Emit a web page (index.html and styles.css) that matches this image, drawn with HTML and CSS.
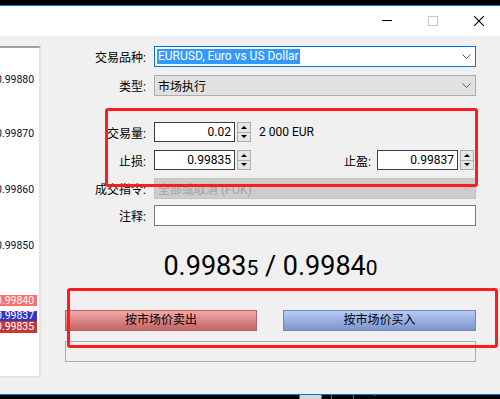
FILE: index.html
```html
<!DOCTYPE html>
<html lang="zh-CN">
<head>
    <meta charset="UTF-8">
    <meta name="viewport" content="width=device-width, initial-scale=1.0">
    <title>订单</title>
    <link rel="stylesheet" href="styles.css">
</head>
<body>
    <div class="screen">
        <div class="topbar"></div>

        <div class="titlebar">
            <div class="win-btns">
                <span class="win-btn"><svg width="10" height="10" viewBox="0 0 10 10"><path d="M0 4.5H10" stroke="#000"/></svg></span>
                <span class="win-btn"><svg width="10" height="10" viewBox="0 0 10 10"><rect x="0.5" y="0.5" width="9" height="9" fill="none" stroke="#c6c6c6"/></svg></span>
                <span class="win-btn"><svg width="10" height="10" viewBox="0 0 10 10"><path d="M0 0L10 10M10 0L0 10" stroke="#000" stroke-width="1.1"/></svg></span>
            </div>
        </div>

        <div class="main">
            <div class="chart">
                <span class="axis-label" style="top: 26px">0.99880</span>
                <span class="axis-label" style="top: 80px">0.99870</span>
                <span class="axis-label" style="top: 136px">0.99860</span>
                <span class="axis-label" style="top: 192px">0.99850</span>
                <span class="axis-label tag-ask" style="top: 247px">0.99840</span>
                <span class="axis-label tag-line" style="top: 263px">0.99837</span>
                <span class="axis-label tag-bid" style="top: 273px">0.99835</span>
            </div>

            <div class="order">
                <div class="field">
                    <span class="field-label">交易品种:</span>
                    <div class="select active">
                        <span class="sel-hl">EURUSD, Euro vs US Dollar</span>
                        <svg class="chev" width="9" height="5" viewBox="0 0 9 5"><path d="M0.5 0.5L4.5 4.5L8.5 0.5" fill="none" stroke="#555"/></svg>
                    </div>
                </div>

                <div class="field f-type">
                    <span class="field-label">类型:</span>
                    <div class="select">
                        <span>市场执行</span>
                        <svg class="chev" width="9" height="5" viewBox="0 0 9 5"><path d="M0.5 0.5L4.5 4.5L8.5 0.5" fill="none" stroke="#555"/></svg>
                    </div>
                </div>

                <div class="field f-volume">
                    <span class="field-label">交易量:</span>
                    <div class="spin-row">
                        <div class="num">0.02</div>
                        <div class="spin"><span><i class="up"></i></span><span><i class="down"></i></span></div>
                        <span class="unit">2 000 EUR</span>
                    </div>
                </div>

                <div class="field f-sl">
                    <span class="field-label">止损:</span>
                    <div class="spin-row">
                        <div class="num">0.99835</div>
                        <div class="spin"><span><i class="up"></i></span><span><i class="down"></i></span></div>
                        <div class="tp-group">
                            <span class="tp-label">止盈:</span>
                            <div class="num">0.99837</div>
                            <div class="spin"><span><i class="up"></i></span><span><i class="down"></i></span></div>
                        </div>
                    </div>
                </div>

                <div class="field f-fill">
                    <span class="field-label">成交指令:</span>
                    <div class="select disabled">
                        <span>全部或取消 (FOK)</span>
                        <svg class="chev" width="9" height="5" viewBox="0 0 9 5"><path d="M0.5 0.5L4.5 4.5L8.5 0.5" fill="none" stroke="#b8b8b8"/></svg>
                    </div>
                </div>

                <div class="field f-note">
                    <span class="field-label">注释:</span>
                    <div class="note-input"></div>
                </div>

                <div class="price">0.9983<small>5</small> / 0.9984<small>0</small></div>

                <div class="actions">
                    <button class="btn sell">按市场价卖出</button>
                    <button class="btn buy">按市场价买入</button>
                </div>

                <div class="status"></div>

                <div class="mark mark-lot"></div>
                <div class="mark mark-trade"></div>
            </div>
        </div>

        <div class="taskbar">
            <span class="tick"></span>
            <span class="tab"></span>
            <span class="tick"></span>
            <span class="tick gap-9"></span>
            <span class="tick gap-21"></span>
            <span class="tick short gap-20"></span>
        </div>
    </div>
</body>
</html>
```

FILE: styles.css
```css
body {
    margin: 0;
    font-family: Roboto, "Noto Sans CJK SC", sans-serif;
    font-size: 12px;
    color: #000;
    background: #000;
}

*, *::before, *::after {
    box-sizing: border-box;
}

.screen {
    width: 500px;
    height: 399px;
    overflow: hidden;
    display: flex;
    flex-direction: column;
}

.topbar {
    height: 6px;
    flex-shrink: 0;
    background: #000;
    border-bottom: 1px solid #0078d7;
}

.titlebar {
    height: 30px;
    flex-shrink: 0;
    background: #fff;
    display: flex;
    justify-content: flex-end;
}

.win-btns {
    display: flex;
    margin-right: -2px;
}

.win-btn {
    width: 46px;
    display: flex;
    align-items: center;
    justify-content: center;
}

/* main area */
.main {
    height: 358px;
    flex-shrink: 0;
    background: #f0f0f0;
    display: flex;
}

.chart {
    width: 41px;
    height: 332px;
    margin-top: 10px;
    flex-shrink: 0;
    background: #fff;
    border-top: 2px solid #a0a0a0;
    border-right: 2px solid #e3e3e3;
    border-bottom: 2px solid #e3e3e3;
    position: relative;
    overflow: hidden;
}

.axis-label {
    position: absolute;
    left: -4px;
    width: 41px;
    height: 11px;
    line-height: 11px;
    font-size: 10.5px;
    color: #0b0b3b;
    white-space: nowrap;
}

.tag-ask {
    background: #ff6e6e;
    color: #fff;
}

.tag-line {
    height: 10px;
    line-height: 10px;
    background: #3434c6;
    color: #fff;
}

.tag-bid {
    height: 12px;
    line-height: 12px;
    background: #c23838;
    color: #fff;
}

.order {
    flex: 1;
    position: relative;
    padding-top: 10px;
}

.field {
    display: grid;
    grid-template-columns: 105px 322px;
    column-gap: 8px;
    align-items: center;
}

.field-label {
    text-align: right;
    white-space: nowrap;
}

.f-type { margin-top: 8px; }
.f-volume { margin-top: 26px; }
.f-sl { margin-top: 8px; }
.f-fill { margin-top: 8px; }
.f-note { margin-top: 6px; }

.select {
    height: 21px;
    border: 1px solid #adadad;
    background: #e1e1e1;
    display: flex;
    align-items: center;
    justify-content: space-between;
    padding: 0 4px 0 3px;
    white-space: nowrap;
}

.select.active {
    background: #fff;
    border-color: #0078d7;
    padding-left: 2px;
}

.select.disabled {
    background: #cccccc;
    border-color: #c4c4c4;
    color: #a3a3a3;
}

.sel-hl {
    background: #3399ff;
    color: #fff;
    padding: 0 1px;
    line-height: 15px;
}

.spin-row {
    display: flex;
    align-items: center;
}

.num {
    width: 81px;
    height: 20px;
    border: 1px solid #3c3c3c;
    background: #fff;
    text-align: right;
    padding-right: 3px;
    line-height: 18px;
}

.spin {
    width: 14px;
    height: 20px;
    margin-left: 2px;
    display: flex;
    flex-direction: column;
}

.spin span {
    flex: 1;
    border: 1px solid #adadad;
    background: #e6e6e6;
    display: flex;
    align-items: center;
    justify-content: center;
}

.spin span + span {
    border-top: 0;
}

.spin i {
    width: 0;
    height: 0;
    border-left: 3px solid transparent;
    border-right: 3px solid transparent;
}

.spin i.up {
    border-bottom: 3px solid #000;
}

.spin i.down {
    border-top: 3px solid #000;
}

.unit {
    margin-left: 8px;
    white-space: nowrap;
}

.tp-group {
    margin-left: auto;
    margin-right: 2px;
    display: flex;
    align-items: center;
}

.tp-label {
    margin-right: 6px;
}

.note-input {
    height: 21px;
    border: 1px solid #7a7a7a;
    background: #fff;
}

.price {
    margin: 20px 0 0 24px;
    width: 411px;
    height: 40px;
    line-height: 40px;
    text-align: center;
    font-size: 27px;
    white-space: nowrap;
}

.price small {
    font-size: 21px;
}

.actions {
    margin: 24px 0 0 24px;
    width: 411px;
    display: grid;
    grid-template-columns: 192px 193px;
    column-gap: 26px;
}

.btn {
    height: 21px;
    padding: 0;
    border: 1px solid;
    font-family: inherit;
    font-size: 12px;
    line-height: 19px;
    color: #000;
    text-align: center;
}

.sell {
    background: linear-gradient(#f3a8a8, #c26464);
    border-color: #b56262;
}

.buy {
    background: linear-gradient(#b7cbf6, #7d94cc);
    border-color: #7285bb;
}

.status {
    margin: 10px 0 0 24px;
    width: 411px;
    height: 21px;
    border: 1px solid #adadad;
}

/* red annotation frames */
.mark {
    position: absolute;
    border: 3px solid #ff1c1c;
    border-radius: 3px;
    pointer-events: none;
}

.mark-lot {
    left: 64px;
    top: 72px;
    width: 373px;
    height: 79px;
}

.mark-trade {
    left: 26px;
    top: 252px;
    width: 431px;
    height: 60px;
}

.taskbar {
    height: 5px;
    flex-shrink: 0;
    background: #000;
    border-top: 1px solid #0078d7;
    display: flex;
    padding-left: 299px;
}

.tick {
    width: 1px;
    height: 4px;
    background: #00c400;
}

.tick.short {
    height: 1px;
}

.tab {
    width: 21px;
    height: 4px;
    background: #d6d6d6;
}

.gap-9 { margin-left: 9px; }
.gap-21 { margin-left: 21px; }
.gap-20 { margin-left: 20px; }
```
